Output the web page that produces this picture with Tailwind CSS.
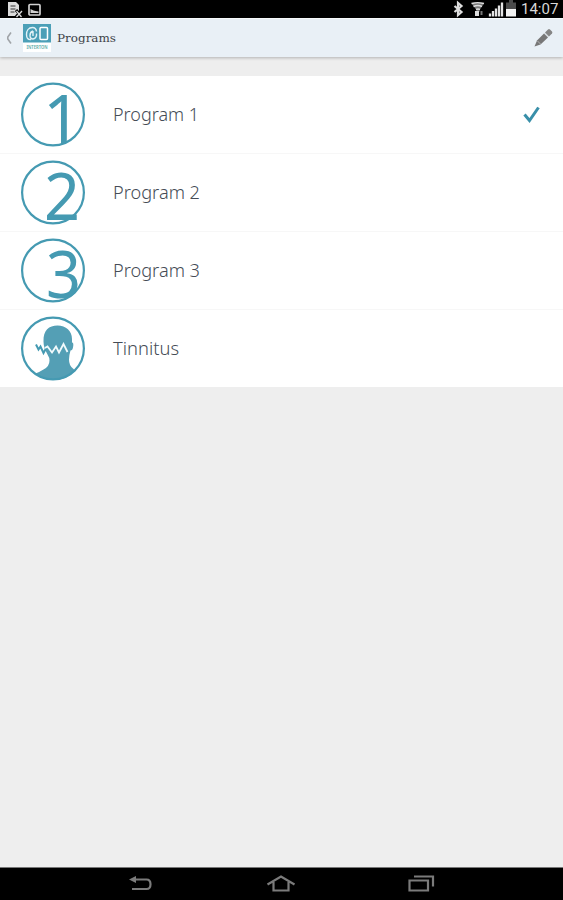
<!DOCTYPE html>
<html lang="en">
<head>
  <meta charset="UTF-8" />
  <meta name="viewport" content="width=device-width, initial-scale=1.0"/>
  <title>Programs</title>
  <script src="https://cdn.jsdelivr.net/npm/@tailwindcss/browser@4"></script>
</head>
<body class="bg-[#eeeeee] h-screen flex flex-col overflow-hidden font-['Noto_Sans','Open_Sans',sans-serif]">

  <!-- Status bar -->
  <div class="h-[18px] shrink-0 bg-black text-[#d8d8d8] flex items-center justify-between pl-2 pr-[5px]">
    <div class="flex items-center gap-[5px]">
      <svg class="w-[15px] h-[18px]" viewBox="0 0 15 18">
        <path d="M0 2h8l3 3v11H0z" fill="#dcdcdc"/>
        <path d="M2.500 6h5M2.500 9h5M2.500 12h4" stroke="#333" stroke-width="1.200"/>
        <path d="M8 10l6 7M14 10l-6 7" stroke="#000" stroke-width="3"/>
        <path d="M8.500 11l5 6M14 11l-5.500 6" stroke="#ddd" stroke-width="1.300"/>
      </svg>
      <svg class="w-[13px] h-[18px]" viewBox="0 0 13 18">
        <rect x="1" y="4.500" width="11" height="10.500" rx="1" fill="none" stroke="#d0d0d0" stroke-width="1.700"/>
        <path d="M2.500 13V9l3 1.500 2 .5 3 .500V13z" fill="#d0d0d0"/>
      </svg>
    </div>
    <div class="flex items-center">
      <svg class="w-[64px] h-[18px]" viewBox="0 0 64 18">
        <path d="M1.500 6l7 6-3.500 3V3l3.500 3-7 6" fill="none" stroke="#dedede" stroke-width="2.200"/>
        <path d="M18.500 3.500h12.500L26.500 10v2h-3v-2z" fill="#777"/>
        <path d="M18.500 3.500q6-1.500 12.500 0M20.500 6.500q4.500-2 8.500 0M23 9.500q2-1 4 0" fill="none" stroke="#ddd" stroke-width="1.500"/>
        <path d="M22 11h4v5h-4z" fill="#ddd"/>
        <path d="M28.500 11v4" stroke="#777" stroke-width="2"/>
        <path d="M37 16.500v-3M40 16.500V11M43 16.500V8.500M46 16.500V5.500M49 16.500V2.500" stroke="#e4e4e4" stroke-width="2.300"/>
        <path d="M56 0h4v2.500h3V9H53V2.500h3z" fill="#4b4b4b"/>
        <path d="M53 9h10v7.500H53z" fill="#f2f2f2"/>
      </svg>
      <span class="font-[Roboto] text-[15px] leading-[18px] w-[37px] ml-[4px] whitespace-nowrap text-[#d8d8d8]">14:07</span>
    </div>
  </div>

  <!-- Action bar -->
  <header class="h-[39px] shrink-0 bg-[#e9f0f6] border-t border-[#f7fafc] shadow-[0_1px_3px_rgba(0,0,0,0.25)] flex items-center pl-[6px] pr-[10px]">
    <svg class="w-[6px] h-[12px]" viewBox="0 0 6 12"><path d="M5 .500L1.800 5v2L5 11.500" fill="none" stroke="#a0a4a8" stroke-width="1.600"/></svg>
    <svg class="w-[28px] h-[28px] ml-[11px]" viewBox="0 0 28 28">
      <path d="M0 0h28v28H0z" fill="#fff"/>
      <path d="M0 0h28v18.500H0z" fill="#4b9fb7"/>
      <path d="M13.500 7.500Q13 3.500 9.500 3.500C5.500 3.500 3.500 7 3.500 10.500S5 16 8 15.500M10 7q-3 1-3 4.500t3 3.500q4-1 3.500-5.500M10 7v5" fill="none" stroke="#e2f2f7" stroke-width="1.400"/>
      <rect x="17" y="3.500" width="7.500" height="12" rx="1" fill="none" stroke="#fff" stroke-width="1.500"/>
      <text x="3.500" y="24.500" textLength="21" lengthAdjust="spacingAndGlyphs" font-family="Noto Sans" font-weight="600" font-size="4.300" fill="#54a9a5">INTERTON</text>
    </svg>
    <svg class="w-[70px] h-[24px] ml-[5px]" viewBox="0 0 70 24">
      <text x="1" y="16" textLength="59" lengthAdjust="spacingAndGlyphs" font-family="DejaVu Serif" font-size="11.500" fill="#3d4348">Programs</text>
    </svg>
    <svg class="w-[20px] h-[20px] ml-auto" viewBox="0 0 20 20">
      <path d="M1.500 18.500L4 12.500 11 5.500l4 4-7.500 7z" fill="#777"/>
      <path d="M12 4.500l3-3q1-.8 2 0l2 2q.8 1 0 2l-3 3z" fill="#858585"/>
      <path d="M4.500 13l3 3" stroke="#b5b5b5"/>
      <path d="M11.500 5l4 4" stroke="#c4c8cb"/>
    </svg>
  </header>

  <!-- Program list -->
  <main class="mt-[19px] bg-white text-[#454c56] text-[18.5px]">
    <div class="h-[78px] flex items-center pl-[21px] pr-[21px] border-b border-[#f7f7f7]">
      <svg class="w-[64px] h-[64px] overflow-visible" viewBox="0 0 64 64">
        <circle cx="32" cy="31.500" r="30.900" fill="none" stroke="#459ab2" stroke-width="2.200"/>
        <text x="22" y="59.500" font-family="Noto Sans" font-size="67" fill="#459ab2">1</text>
      </svg>
      <svg class="w-[100px] h-[30px] ml-[27px]" viewBox="0 0 100 30"><text x="1" y="21" textLength="86" lengthAdjust="spacingAndGlyphs" font-weight="350" fill="currentColor">Program 1</text></svg>
      <svg class="w-[20px] h-[20px] ml-auto" viewBox="0 0 20 20"><path d="M2.500 9.500l5 6L16.500 2.500" fill="none" stroke="#398fa9" stroke-width="3"/></svg>
    </div>
    <div class="h-[78px] flex items-center pl-[21px] pr-[21px] border-b border-[#f7f7f7]">
      <svg class="w-[64px] h-[64px] overflow-visible" viewBox="0 0 64 64">
        <circle cx="32" cy="31.500" r="30.900" fill="none" stroke="#459ab2" stroke-width="2.200"/>
        <text x="23" y="59" font-family="Noto Sans" font-size="66" textLength="36" lengthAdjust="spacingAndGlyphs" fill="#459ab2">2</text>
      </svg>
      <svg class="w-[100px] h-[30px] ml-[27px]" viewBox="0 0 100 30"><text x="1" y="21" textLength="87" lengthAdjust="spacingAndGlyphs" font-weight="350" fill="currentColor">Program 2</text></svg>
    </div>
    <div class="h-[78px] flex items-center pl-[21px] pr-[21px] border-b border-[#f7f7f7]">
      <svg class="w-[64px] h-[64px] overflow-visible" viewBox="0 0 64 64">
        <circle cx="32" cy="31.500" r="30.900" fill="none" stroke="#459ab2" stroke-width="2.200"/>
        <text x="25" y="58.500" font-family="Noto Sans" font-size="66" textLength="35" lengthAdjust="spacingAndGlyphs" fill="#459ab2">3</text>
      </svg>
      <svg class="w-[100px] h-[30px] ml-[27px]" viewBox="0 0 100 30"><text x="1" y="21" textLength="87" lengthAdjust="spacingAndGlyphs" font-weight="350" fill="currentColor">Program 3</text></svg>
    </div>
    <div class="h-[77px] flex items-center pl-[21px] pr-[21px]">
      <svg class="w-[64px] h-[64px] overflow-visible" viewBox="0 0 64 64">
        <path d="M14.500 56.500q4-1.500 8-4 6-3 6-9 0-3-2-6-4-7-4-13C22 13 28 8.500 36.500 8.500S51 14 51 22v3.500q2 0 1 5-.5 3-2.500 3-1.500 5-1.500 9 0 6 4 9 1 1 2 2-8 9.500-21.500 9.500Q22 62 14.500 56.500z" fill="#549fb5"/>
        <circle cx="32" cy="31.500" r="30.900" fill="none" stroke="#459ab2" stroke-width="2.200"/>
        <path d="M15 27.500l2.500 5 2-3 3 6.500 3-5.500" fill="none" stroke="#459ab2" stroke-width="2"/>
        <path d="M24 31l2.500-1.500 4.500 6 4-6 3 6 4.500-8.500 4 8" fill="none" stroke="#f2fafc" stroke-width="1.800"/>
      </svg>
      <svg class="w-[100px] h-[30px] ml-[27px]" viewBox="0 0 100 30"><text x="1" y="21" textLength="66" lengthAdjust="spacingAndGlyphs" font-weight="350" fill="currentColor">Tinnitus</text></svg>
    </div>
  </main>

  <!-- Navigation bar -->
  <nav class="mt-auto h-[33px] shrink-0 bg-black border-t border-[#777] flex items-center justify-between pl-[129px] pr-[128px] text-[#7b7b7b]">
    <svg class="w-[24px] h-[18px]" viewBox="0 0 24 18"><path d="M5 4.500h12.500q4 0 4 4.800t-4 4.700H3" fill="none" stroke="currentColor" stroke-width="2.200"/><path d="M0 4.500L7 1v7z" fill="currentColor"/></svg>
    <svg class="w-[30px] h-[18px]" viewBox="0 0 30 18"><path d="M1.500 9.500L15 1.500l13.500 8M7.500 7v8.500h15V7" fill="none" stroke="currentColor" stroke-width="2.200"/></svg>
    <svg class="w-[27px] h-[18px]" viewBox="0 0 27 18"><path d="M1.500 5.500H20v10H1.500zM6 1.500h19v10" fill="none" stroke="currentColor" stroke-width="2.200"/></svg>
  </nav>

</body>
</html>
